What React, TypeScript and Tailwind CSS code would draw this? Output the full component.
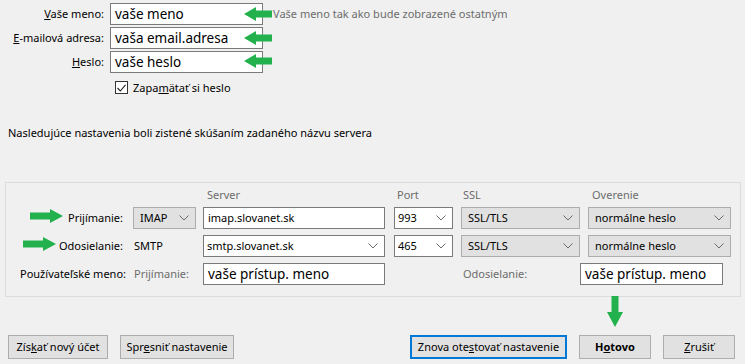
import React from "react";

const Chevron = () => (
    <svg width="10" height="6" viewBox="0 0 10 6" className="shrink-0">
        <polyline points="0.5,0.5 5,5 9.5,0.5" fill="none" stroke="#6b6b6b" strokeWidth="1" />
    </svg>
);

const ArrowLeft = ({ x, y }: { x: number; y: number }) => (
    <svg width="28" height="14" viewBox="0 0 28 14" className="absolute" style={{ left: x, top: y }}>
        <polygon points="0,7 12,0 12,3.5 28,3.5 28,10.5 12,10.5 12,14" fill="#22b14c" />
    </svg>
);

const ArrowRight = ({ x, y, w }: { x: number; y: number; w: number }) => (
    <svg width={w} height="14" viewBox={`0 0 ${w} 14`} className="absolute" style={{ left: x, top: y }}>
        <polygon points={`0,3.5 ${w - 13},3.5 ${w - 13},0 ${w},7 ${w - 13},14 ${w - 13},10.5 0,10.5`} fill="#22b14c" />
    </svg>
);

const ArrowDown = ({ x, y }: { x: number; y: number }) => (
    <svg width="16" height="31" viewBox="0 0 16 31" className="absolute" style={{ left: x, top: y }}>
        <polygon points="4.5,0 11.5,0 11.5,16 16,16 8,31 0,16 4.5,16" fill="#22b14c" />
    </svg>
);

// biele pole na text
function TextBox({ value, className, big }: { value: string; className: string; big?: boolean }) {
    return (
        <div className={`h-[22px] bg-white border border-[#7a7a7a] flex items-center px-[4px] whitespace-nowrap ${big ? "text-[13.5px]" : ""} ${className}`}>
            <span>{value}</span>
        </div>
    );
}

// rozbalovaci zoznam (sivy = iba vyber, biely = editovatelny)
function Combo({ value, className, editable }: { value: string; className: string; editable?: boolean }) {
    return (
        <div className={`h-[22px] border flex items-center justify-between pr-[6px] ${editable ? "bg-white border-[#7a7a7a] pl-[3px]" : "bg-[#e1e1e1] border-[#adadad] pl-[6px]"} ${className}`}>
            <span>{value}</span>
            <Chevron />
        </div>
    );
}

function Button({ children, className, focused }: { children: React.ReactNode; className: string; focused?: boolean }) {
    return (
        <div className={`h-[24px] bg-[#e1e1e1] flex items-center justify-center whitespace-nowrap ${focused ? "border-2 border-[#0078d7]" : "border border-[#adadad]"} ${className}`}>
            <span>{children}</span>
        </div>
    );
}

export default function App() {
    return (
        <div className="relative w-[745px] h-[364px] overflow-hidden bg-[#f0f0f0] text-black text-[11px] leading-[16px] font-['Noto_Sans',sans-serif]">
            {/* horne polia */}
            <div className="flex flex-col gap-[2px] pt-[3px]">
                <div className="flex items-center h-[22px]">
                    <div className="w-[104px] text-right"><u>V</u>aše meno:</div>
                    <TextBox value="vaše meno" big className="ml-[6px] w-[153px]" />
                    <div className="ml-[10px] text-[#6d6d6d]">Vaše meno tak ako bude zobrazené ostatným</div>
                </div>
                <div className="flex items-center h-[22px]">
                    <div className="w-[104px] text-right"><u>E</u>-mailová adresa:</div>
                    <TextBox value="vaša email.adresa" big className="ml-[6px] w-[153px]" />
                </div>
                <div className="flex items-center h-[22px]">
                    <div className="w-[104px] text-right"><u>H</u>eslo:</div>
                    <TextBox value="vaše heslo" big className="ml-[6px] w-[153px]" />
                </div>
                <div className="flex items-center h-[17px] mt-[4px] pl-[115px]">
                    <div className="w-[13px] h-[13px] bg-white border border-[#333] flex items-center justify-center">
                        <svg width="9" height="8" viewBox="0 0 9 8">
                            <polyline points="0.5,4 3.3,7 8.5,0.8" fill="none" stroke="#222" strokeWidth="1.1" />
                        </svg>
                    </div>
                    <div className="ml-[5px]">Zapa<u>m</u>ätať si heslo</div>
                </div>
            </div>

            <div className="mt-[29px] pl-[8px]">Nasledujúce nastavenia boli zistené skúšaním zadaného názvu servera</div>

            {/* skupina servera */}
            <div className="mt-[41px] ml-[5px] w-[736px] h-[115px] border border-[#dcdcdc] pt-[5px]">
                <div className="flex h-[14px] items-center text-[#6d6d6d]">
                    <div className="ml-[201px] w-[190px]">Server</div>
                    <div className="w-[66px]">Port</div>
                    <div className="w-[129px]">SSL</div>
                    <div>Overenie</div>
                </div>

                <div className="flex items-center h-[22px] mt-[5px]">
                    <div className="w-[120px] text-right pr-[3px]">Prijímanie:</div>
                    <Combo value="IMAP" className="ml-[7px] w-[63px]" />
                    <TextBox value="imap.slovanet.sk" className="ml-[7px] w-[182px]" />
                    <Combo value="993" editable className="ml-[9px] w-[59px]" />
                    <Combo value="SSL/TLS" className="ml-[8px] w-[119px]" />
                    <Combo value="normálne heslo" className="ml-[8px] w-[143px]" />
                </div>

                <div className="flex items-center h-[22px] mt-[6px]">
                    <div className="w-[120px] text-right pr-[3px]">Odosielanie:</div>
                    <div className="ml-[7px] w-[63px] pl-[1px]">SMTP</div>
                    <Combo value="smtp.slovanet.sk" editable className="ml-[7px] w-[182px]" />
                    <Combo value="465" editable className="ml-[9px] w-[59px]" />
                    <Combo value="SSL/TLS" className="ml-[8px] w-[119px]" />
                    <Combo value="normálne heslo" className="ml-[8px] w-[143px]" />
                </div>

                <div className="flex items-center h-[22px] mt-[6px]">
                    <div className="w-[120px] text-right">Používateľské meno:</div>
                    <div className="ml-[7px] w-[63px] pl-[1px] text-[#6d6d6d]">Prijímanie:</div>
                    <TextBox value="vaše prístup. meno" big className="ml-[7px] w-[182px]" />
                    <div className="ml-[9px] w-[186px] pl-[69px] text-[#6d6d6d]">Odosielanie:</div>
                    <TextBox value="vaše prístup. meno" big className="w-[143px]" />
                </div>
            </div>

            {/* tlacidla */}
            <div className="flex items-center mt-[38px] pl-[8px] pr-[10px]">
                <Button className="w-[100px]">Zís<u>k</u>ať nový účet</Button>
                <Button className="ml-[12px] w-[114px]">Spr<u>e</u>sniť nastavenie</Button>
                <div className="flex-1" />
                <Button focused className="w-[157px]">Znova ote<u>s</u>tovať nastavenie</Button>
                <Button className="ml-[12px] w-[72px] font-bold">H<u>o</u>tovo</Button>
                <Button className="ml-[12px] w-[72px]"><u>Z</u>rušiť</Button>
            </div>

            {/* zelene sipky */}
            <ArrowLeft x={244} y={7} />
            <ArrowLeft x={244} y={31} />
            <ArrowLeft x={244} y={54} />
            <ArrowRight x={30} y={209} w={33} />
            <ArrowRight x={23} y={237} w={33} />
            <ArrowDown x={607} y={296} />
        </div>
    );
}
